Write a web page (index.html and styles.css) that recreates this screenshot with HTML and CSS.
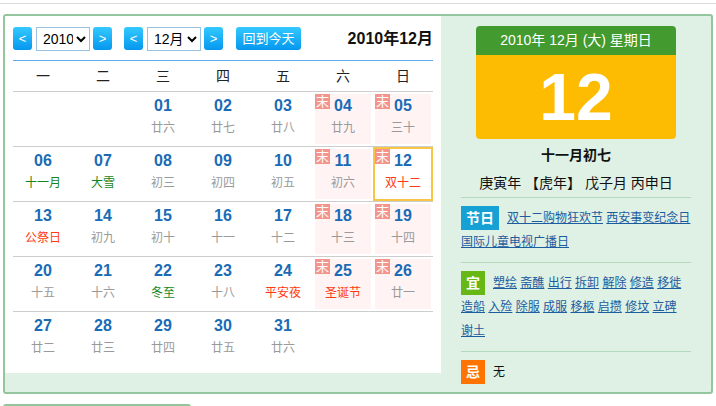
FILE: index.html
```html
<!DOCTYPE html>
<html lang="zh-CN">
<head>
<meta charset="utf-8">
<title>万年历</title>
<link rel="stylesheet" href="styles.css">
</head>
<body>
<div class="topline"></div>
<div class="box">
  <div class="cal">
    <div class="ctrl">
      <button class="btn arrow">&lt;</button>
      <select class="sel"><option>2010</option></select>
      <button class="btn arrow">&gt;</button>
      <button class="btn arrow grp">&lt;</button>
      <select class="sel"><option>12月</option></select>
      <button class="btn arrow">&gt;</button>
      <button class="btn today">回到今天</button>
      <div class="ym">2010年12月</div>
    </div>
    <div class="wkhead">
      <span>一</span><span>二</span><span>三</span><span>四</span><span>五</span><span>六</span><span>日</span>
    </div>
    <div class="week">
      <div class="day"></div>
      <div class="day"></div>
      <div class="day"><b class="n">01</b><i class="lu">廿六</i></div>
      <div class="day"><b class="n">02</b><i class="lu">廿七</i></div>
      <div class="day"><b class="n">03</b><i class="lu">廿八</i></div>
      <div class="day wk"><span class="mo">末</span><b class="n">04</b><i class="lu">廿九</i></div>
      <div class="day wk"><span class="mo">末</span><b class="n">05</b><i class="lu">三十</i></div>
    </div>
    <div class="week">
      <div class="day"><b class="n">06</b><i class="lu green">十一月</i></div>
      <div class="day"><b class="n">07</b><i class="lu green">大雪</i></div>
      <div class="day"><b class="n">08</b><i class="lu">初三</i></div>
      <div class="day"><b class="n">09</b><i class="lu">初四</i></div>
      <div class="day"><b class="n">10</b><i class="lu">初五</i></div>
      <div class="day wk"><span class="mo">末</span><b class="n">11</b><i class="lu">初六</i></div>
      <div class="day wk cur"><span class="mo">末</span><b class="n">12</b><i class="lu red">双十二</i></div>
    </div>
    <div class="week">
      <div class="day"><b class="n">13</b><i class="lu red">公祭日</i></div>
      <div class="day"><b class="n">14</b><i class="lu">初九</i></div>
      <div class="day"><b class="n">15</b><i class="lu">初十</i></div>
      <div class="day"><b class="n">16</b><i class="lu">十一</i></div>
      <div class="day"><b class="n">17</b><i class="lu">十二</i></div>
      <div class="day wk"><span class="mo">末</span><b class="n">18</b><i class="lu">十三</i></div>
      <div class="day wk"><span class="mo">末</span><b class="n">19</b><i class="lu">十四</i></div>
    </div>
    <div class="week">
      <div class="day"><b class="n">20</b><i class="lu">十五</i></div>
      <div class="day"><b class="n">21</b><i class="lu">十六</i></div>
      <div class="day"><b class="n">22</b><i class="lu green">冬至</i></div>
      <div class="day"><b class="n">23</b><i class="lu">十八</i></div>
      <div class="day"><b class="n">24</b><i class="lu red">平安夜</i></div>
      <div class="day wk"><span class="mo">末</span><b class="n">25</b><i class="lu red">圣诞节</i></div>
      <div class="day wk"><span class="mo">末</span><b class="n">26</b><i class="lu">廿一</i></div>
    </div>
    <div class="week">
      <div class="day"><b class="n">27</b><i class="lu">廿二</i></div>
      <div class="day"><b class="n">28</b><i class="lu">廿三</i></div>
      <div class="day"><b class="n">29</b><i class="lu">廿四</i></div>
      <div class="day"><b class="n">30</b><i class="lu">廿五</i></div>
      <div class="day"><b class="n">31</b><i class="lu">廿六</i></div>
      <div class="day"></div>
      <div class="day"></div>
    </div>
  </div>
  <div class="side">
    <div class="card">
      <div class="card-h">2010年 12月 (大) 星期日</div>
      <div class="card-d">12</div>
    </div>
    <div class="lunar">十一月初七</div>
    <div class="gz">庚寅年 【虎年】 戊子月 丙申日</div>
    <div class="sec first"><span class="tag t-jr">节日</span><a href="#">双十二购物狂欢节</a> <a href="#">西安事变纪念日</a> <a href="#">国际儿童电视广播日</a></div>
    <div class="sec"><span class="tag t-yi">宜</span><a href="#">塑绘</a> <a href="#">斋醮</a> <a href="#">出行</a> <a href="#">拆卸</a> <a href="#">解除</a> <a href="#">修造</a> <a href="#">移徙</a> <a href="#">造船</a> <a href="#">入殓</a> <a href="#">除服</a> <a href="#">成服</a> <a href="#">移柩</a> <a href="#">启攒</a> <a href="#">修坟</a> <a href="#">立碑</a> <a href="#">谢土</a></div>
    <div class="sec"><span class="tag t-ji">忌</span><span class="none">无</span></div>
  </div>
</div>
<div class="next"></div>
</body>
</html>
```

FILE: styles.css
```css
* { box-sizing: border-box; }
html, body { margin: 0; padding: 0; background: #fff; }
body {
  font-family: "Liberation Sans", "Noto Sans CJK SC", sans-serif;
  font-size: 14px;
  color: #222;
  width: 716px;
  overflow: hidden;
}
.topline { height: 4px; border-bottom: 1px solid #dcdcdc; }
.box {
  margin: 10px 3px 0 3px;
  height: 380px;
  border: 2px solid #93c69d;
  border-radius: 3px;
  background: #dff1e5;
  display: flex;
  align-items: flex-start;
}
.cal {
  width: 436px;
  background: #fff;
  padding: 11px 8px 7px 8px;
}
.ctrl {
  display: flex;
  align-items: center;
  height: 34px;
  padding-bottom: 10px;
  border-bottom: 1px solid #5eaaee;
  box-sizing: content-box;
  height: 23px;
}
.btn {
  border: none;
  border-radius: 3px;
  background: linear-gradient(#34c9ff, #0597ee);
  color: #fff;
  font-family: "Liberation Sans", "Noto Sans CJK SC", sans-serif;
  padding: 0;
  height: 23px;
  cursor: pointer;
}
.arrow { width: 19px; font-size: 13px; line-height: 23px; }
.grp { margin-left: 12px; }
.sel {
  width: 54px;
  height: 24px;
  margin: 0 3px 0 4px;
  border: 1px solid #9cc2e2;
  border-radius: 0;
  background: #fff;
  font-family: "Liberation Sans", "Noto Sans CJK SC", sans-serif;
  font-size: 14px;
  color: #000;
  padding: 0 0 0 2px;
}
.today {
  margin-left: 13px;
  width: 65px;
  font-size: 13px;
  line-height: 23px;
}
.ym {
  margin-left: auto;
  font-size: 16px;
  font-weight: bold;
  color: #111;
  line-height: 20px;
}
.wkhead {
  display: grid;
  grid-template-columns: repeat(7, 60px);
  height: 30px;
  line-height: 30px;
  text-align: center;
  font-size: 14px;
  color: #222;
}
.week {
  display: grid;
  grid-template-columns: repeat(7, 60px);
  border-top: 1px solid #cdcdcd;
  height: 55px;
}
.week:last-child { border-top: 1px solid #cdcdcd; }
.day {
  position: relative;
  height: 54px;
  text-align: center;
  padding-top: 5px;
}
.day .n {
  display: block;
  font-size: 16px;
  font-weight: bold;
  line-height: 18px;
  color: #1a6bb6;
}
.day .lu {
  display: block;
  margin-top: 4px;
  font-style: normal;
  font-size: 12px;
  line-height: 18px;
  color: #9a9a9a;
}
.day .lu.green { color: #17861a; }
.day .lu.red { color: #ff3a10; }
.wk {
  background: #fff3f4;
  box-shadow: inset 0 0 0 2px #fff;
}
.wk.cur {
  background: #fff;
  box-shadow: inset 0 0 0 2px #f8c546;
}
.mo {
  position: absolute;
  left: 2px;
  top: 2px;
  width: 15px;
  height: 15px;
  line-height: 15px;
  font-size: 13px;
  color: #fff;
  background: #f4958d;
  text-align: center;
}
.side {
  flex: 1;
  align-self: stretch;
  padding: 0 20px;
}
.card {
  width: 200px;
  margin: 10px auto 0 auto;
  border-radius: 4px;
  overflow: hidden;
  text-align: center;
  color: #fff;
}
.card-h {
  height: 29px;
  line-height: 29px;
  background: #439a2f;
  font-size: 14px;
}
.card-d {
  height: 84px;
  line-height: 84px;
  background: #fdbc01;
  font-size: 66px;
  font-weight: bold;
}
.lunar {
  margin-top: 5px;
  text-align: center;
  font-weight: bold;
  font-size: 14px;
  line-height: 22px;
  color: #111;
}
.gz {
  margin-top: 6px;
  text-align: center;
  font-size: 14px;
  line-height: 22px;
  color: #111;
}
.sec {
  border-top: 1px solid #b4d9c0;
  padding: 8px 0;
  font-size: 12px;
  line-height: 24px;
}
.sec.first { margin-top: 3px; }
.sec a { color: #1d5c9f; text-decoration: underline; }
.tag {
  display: inline-block;
  vertical-align: top;
  height: 24px;
  width: 24px;
  line-height: 24px;
  margin-right: 8px;
  text-align: center;
  color: #fff;
  font-size: 14px;
  font-weight: bold;
}
.t-jr { width: 38px; background: #16a1d4; }
.t-yi { background: #67b815; }
.t-ji { background: #ff7300; }
.none { color: #111; }
.next {
  margin: 10px 0 0 3px;
  width: 188px;
  height: 12px;
  border: 2px solid #93c69d;
  border-radius: 3px;
}
```
